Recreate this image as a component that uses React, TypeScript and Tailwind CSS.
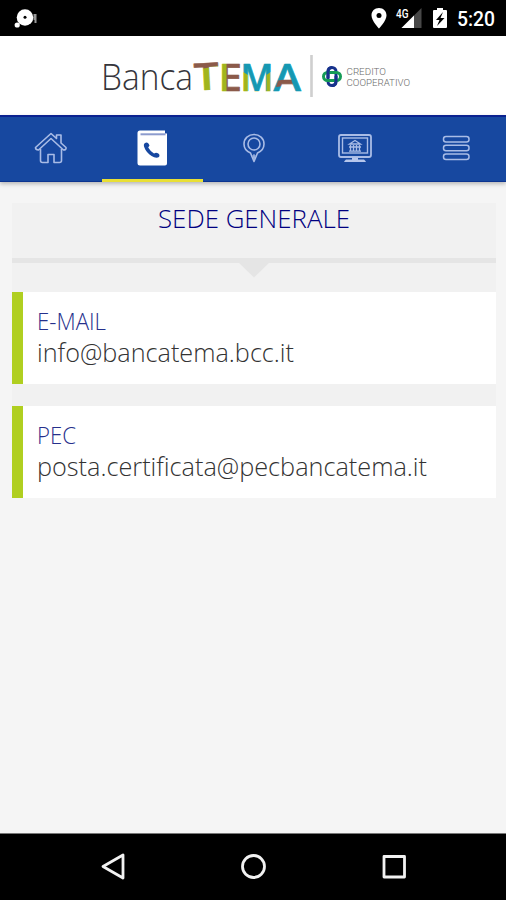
import React from "react";

type Contact = {
  label: string;
  value: string;
  labelWidth: number;
  valueWidth: number;
};

const contacts: Contact[] = [
  { label: "E-MAIL", value: "info@bancatema.bcc.it", labelWidth: 69, valueWidth: 257 },
  { label: "PEC", value: "posta.certificata@pecbancatema.it", labelWidth: 39, valueWidth: 390 },
];

const StatusBar = () => {
  return (
    <div className="flex h-9 shrink-0 items-center bg-black">
      <svg width="506" height="36" viewBox="0 0 506 36" fill="white">
        <circle cx="25" cy="17.5" r="8.300" />
        <circle cx="17.200" cy="25" r="2.600" />
        <circle cx="25" cy="17.300" r="1.500" fill="black" />
        <path d="M33.500 14h3v9h-2v-3h-1z" opacity=".6" />
        <path d="M379 8c-4.500 0-7.500 3.200-7.500 7.400 0 5.200 7.500 13 7.500 13s7.500-7.800 7.500-13c0-4.200-3-7.400-7.500-7.400z" />
        <circle cx="379" cy="15.400" r="2.500" fill="black" />
        <path d="M421.500 8v20h-20z" fill="#484848" />
        <path d="M414 15.500V28h-12.500z" />
        <text x="396" y="17.500" fontSize="12" fontWeight="500" textLength="12.500" lengthAdjust="spacingAndGlyphs" fontFamily="Roboto, sans-serif" stroke="black" strokeWidth="2" paintOrder="stroke">
          4G
        </text>
        <path d="M437 8h6v2h3q1 0 1 1v16q0 1-1 1h-12q-1 0-1-1V11q0-1 1-1h3z" />
        <path d="M443 12l-7 8h3.500l-2.500 6 7.500-8h-4z" fill="black" />
        <text x="457" y="25.500" fontSize="20" fontWeight="500" textLength="38" lengthAdjust="spacingAndGlyphs" fontFamily="Roboto, sans-serif">
          5:20
        </text>
      </svg>
    </div>
  );
};

const Logo = () => {
  return (
    <svg width="320" height="60" viewBox="95 45 320 60">
      <defs>
        {/* colour blocks showing through the TEMA letters */}
        <pattern id="tema" patternUnits="userSpaceOnUse" x="190" y="50" width="120" height="50">
          <rect width="120" height="50" fill="#a1b51c" />
          <path d="M0 0H30V15.500L0 19z" fill="#8b5a4a" />
          <rect x="36.500" width="15" height="50" fill="#8b5a4a" />
          <path d="M51.500 0H82V20L76.500 24V40H58V24L51.500 20z" fill="#1698b2" />
          <rect x="82" width="38" height="50" fill="#1698b2" />
          <path d="M88 29.500L101 27.500L103 34L86 36z" fill="#8b5a4a" />
        </pattern>
      </defs>
      <text x="101" y="89" fontSize="37" fontWeight="300" fill="#35353b" textLength="92" lengthAdjust="spacingAndGlyphs" fontFamily="'Open Sans', sans-serif">
        Banca
      </text>
      <g fontFamily="'Open Sans', sans-serif" fontWeight="600" fontSize="37.500" fill="url(#tema)" stroke="url(#tema)" strokeWidth=".7" strokeLinejoin="round">
        <text x="194" y="89" textLength="25" lengthAdjust="spacingAndGlyphs" transform="rotate(-3 206 76)">T</text>
        <text x="218.500" y="89.500" textLength="23.500" lengthAdjust="spacingAndGlyphs">E</text>
        <text x="240.500" y="89.500" textLength="33" lengthAdjust="spacingAndGlyphs">M</text>
        <text x="273.500" y="89.500" textLength="27.500" lengthAdjust="spacingAndGlyphs">A</text>
      </g>
      <path d="M311.500 54v42" stroke="#cfcfcf" strokeWidth="2.600" />
      <g fill="none" strokeWidth="3">
        <rect x="328" y="66.500" width="8" height="18" rx="4" stroke="#17328c" />
        <rect x="323.500" y="71.500" width="17" height="8" rx="4" stroke="#159b56" />
        <path d="M328 77v-6q0-4.500 4-4.500M336 75v5q0 4.500-4 4.500" stroke="#17328c" />
      </g>
      <g fontFamily="Roboto, sans-serif" fontSize="9.500" fontWeight="300" fill="#6a6a6a">
        <text x="346.500" y="73.500" textLength="39.500" lengthAdjust="spacingAndGlyphs">CREDITO</text>
        <text x="346.500" y="84.500" textLength="63.500" lengthAdjust="spacingAndGlyphs">COOPERATIVO</text>
      </g>
    </svg>
  );
};

const HomeIcon = () => (
  <svg width="36" height="36" viewBox="34 130 36 36" fill="none" stroke="#a9bce6" strokeWidth="1.600" strokeLinejoin="round">
    <path d="M35.500 147.500L51 133.500l5.500 5v-3.500h4.500v8l5 4.500q.5 2.500-2.500 2.500L51 138.500l-12.500 11.500q-3 0-3-2.500z" />
    <path d="M40.500 149v11.500q0 2 2 2h5.500v-8h6v8h5.500q2 0 2-2v-11.500" />
  </svg>
);

const PhoneBookIcon = () => (
  <svg width="36" height="40" viewBox="135 128 36 40">
    <path d="M140 130.500h25v3h2v30q0 2-2 2h-25q-2.500 0-2.500-2.500v-30q0-2.500 2.500-2.500z" fill="white" />
    <path d="M140.500 134.300h25" stroke="#8c9bcd" strokeWidth="2" />
    <path d="M145 143c2-1.500 3.500 0 4.500 2.500l-1.300 2q2.300 4 5.800 6l2-.8c3 .5 4.300 2.300 3 4.300-3.500 2-8.500-1-12-5-2.500-3.300-4.500-7.500-2-9z" fill="#1748a0" />
  </svg>
);

const PinIcon = () => (
  <svg width="30" height="36" viewBox="239 130 30 36" fill="none" stroke="#a9bce6" strokeWidth="1.600" strokeLinejoin="round">
    <path d="M254 134.500c-5.500 0-10 4-10 9.500 0 4.300 3 7.500 6.500 9l3.500 8.500 3.500-8.500c3.500-1.500 6.500-4.700 6.500-9 0-5.500-4.500-9.500-10-9.500z" />
    <circle cx="254" cy="144" r="6" />
    <path d="M253 155h2l-1 4z" strokeWidth="1" />
  </svg>
);

const MonitorIcon = () => (
  <svg width="38" height="36" viewBox="336 130 38 36" fill="none" stroke="#a9bce6">
    <rect x="339" y="135" width="32" height="22" rx="2" strokeWidth="1.800" />
    <rect x="342.500" y="138" width="25" height="15" strokeWidth="1.400" />
    <path d="M349.500 144l5.500-3.500 5.500 3.500zM350.500 145v6M353.500 145v6M356.500 145v6M359.500 145v6M349 151.200h12M349 147h12" strokeWidth="1.300" />
    <path d="M352 157.500h6v2h6q1.500 1 2 2.500h-22q.5-1.500 2-2.500h6z" fill="#b6c6ec" stroke="none" />
  </svg>
);

const MenuIcon = () => (
  <svg width="32" height="36" viewBox="440 130 32 36" fill="none" stroke="#a9bce6" strokeWidth="1.500">
    <rect x="443.500" y="136.500" width="25.500" height="5.500" rx="2.500" />
    <rect x="443.500" y="145.300" width="25.500" height="5.500" rx="2.500" />
    <rect x="443.500" y="154" width="25.500" height="5.500" rx="2.500" />
  </svg>
);

const tabs = [HomeIcon, PhoneBookIcon, PinIcon, MonitorIcon, MenuIcon];

const NavBar = () => {
  return (
    <nav className="grid h-[67px] shrink-0 grid-cols-5 border-t-2 border-b border-t-[#0b2290] border-b-[#0d3590] bg-[#1748a0] pl-px shadow-[0_2px_4px_rgba(0,0,0,0.25)]">
      {tabs.map((Icon, i) => (
        <div
          key={i}
          className={
            i === 1
              ? "-mb-px flex items-center justify-center border-b-[3px] border-[#e9df35]"
              : "-mb-px flex items-center justify-center border-b-[3px] border-transparent"
          }
        >
          <Icon />
        </div>
      ))}
    </nav>
  );
};

// keeps a line of text at a fixed width whatever the font hinting does
const FitText = ({ text, width, size, color }: { text: string; width: number; size: number; color: string }) => {
  return (
    <svg className="block overflow-visible" width={width} height="32">
      <text x="0" y="24" fontSize={size} fontWeight="300" fill={color} textLength={width} lengthAdjust="spacingAndGlyphs" fontFamily="'Open Sans', sans-serif">
        {text}
      </text>
    </svg>
  );
};

const ContactCard = ({ label, value, labelWidth, valueWidth }: Contact) => {
  return (
    <div className="h-[92px] border-l-[11px] border-[#b0cf20] bg-white pt-[14px] pl-[14px]">
      <FitText text={label} width={labelWidth} size={23} color="#26308c" />
      <FitText text={value} width={valueWidth} size={26} color="#333333" />
    </div>
  );
};

const AndroidBar = () => {
  return (
    <div className="h-[67px] shrink-0 border-t border-[#777] bg-black">
      <svg width="506" height="66" viewBox="0 834 506 66" fill="none" stroke="#f2f2f2" strokeWidth="2.800" strokeLinejoin="round">
        <path d="M103 866.500l20-11.500v23z" />
        <circle cx="253.500" cy="866.500" r="11" />
        <rect x="384" y="856.500" width="20.500" height="20.500" />
      </svg>
    </div>
  );
};

const App = () => {
  return (
    <div className="flex h-[900px] w-[506px] flex-col overflow-hidden bg-[#f5f5f5] font-['Open_Sans',sans-serif]">
      <StatusBar />
      <header className="flex h-[79px] shrink-0 items-center bg-white pl-[95px]">
        <Logo />
      </header>
      <NavBar />
      <main className="flex-1 pt-[21px] pr-[10px] pl-3">
        <section className="bg-[#f1f1f1]">
          <div className="flex h-[60px] justify-center border-b-[5px] border-[#e5e5e5] pt-px">
            <FitText text="SEDE GENERALE" width={192} size={26} color="#000080" />
          </div>
          <div className="flex h-[29px] justify-center">
            <svg width="30" height="15">
              <path d="M0 0h30L15 14.500z" fill="#e5e5e5" />
            </svg>
          </div>
          <div className="flex flex-col gap-[22px]">
            {contacts.map((contact) => (
              <ContactCard key={contact.label} {...contact} />
            ))}
          </div>
        </section>
      </main>
      <AndroidBar />
    </div>
  );
};

export default App;
